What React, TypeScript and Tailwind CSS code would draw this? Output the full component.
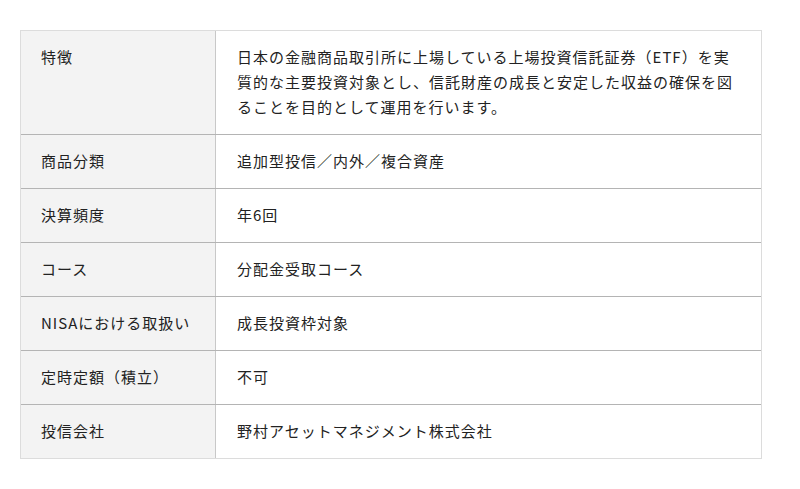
const rows: { label: string; value: string }[] = [
  {
    label: "特徴",
    value:
      "日本の金融商品取引所に上場している上場投資信託証券（ETF）を実質的な主要投資対象とし、信託財産の成長と安定した収益の確保を図ることを目的として運用を行います。",
  },
  { label: "商品分類", value: "追加型投信／内外／複合資産" },
  { label: "決算頻度", value: "年6回" },
  { label: "コース", value: "分配金受取コース" },
  { label: "NISAにおける取扱い", value: "成長投資枠対象" },
  { label: "定時定額（積立）", value: "不可" },
  { label: "投信会社", value: "野村アセットマネジメント株式会社" },
];

export default function App() {
  return (
    <div
      className="w-[800px] h-[489px] bg-white pt-[30px] pl-[20px] text-[#222] text-[15px] leading-[25px] tracking-[1px]"
      style={{ fontFamily: '"Noto Sans CJK JP", "Noto Sans", sans-serif' }}
    >
      <div className="w-[742px] border border-[#dcdcdc]">
        {rows.map((row, i) => (
          <div
            key={row.label}
            className={
              "flex " + (i < rows.length - 1 ? "border-b border-[#b4b4b4]" : "")
            }
          >
            <div className="w-[195px] shrink-0 bg-[#f3f3f3] border-r border-[#c8c8c8] pl-[20px] pr-2 pt-[13px] pb-[15px]">
              {row.label}
            </div>
            <div className="flex-1 pl-[21px] pr-[22px] pt-[13px] pb-[15px]">{row.value}</div>
          </div>
        ))}
      </div>
    </div>
  );
}
